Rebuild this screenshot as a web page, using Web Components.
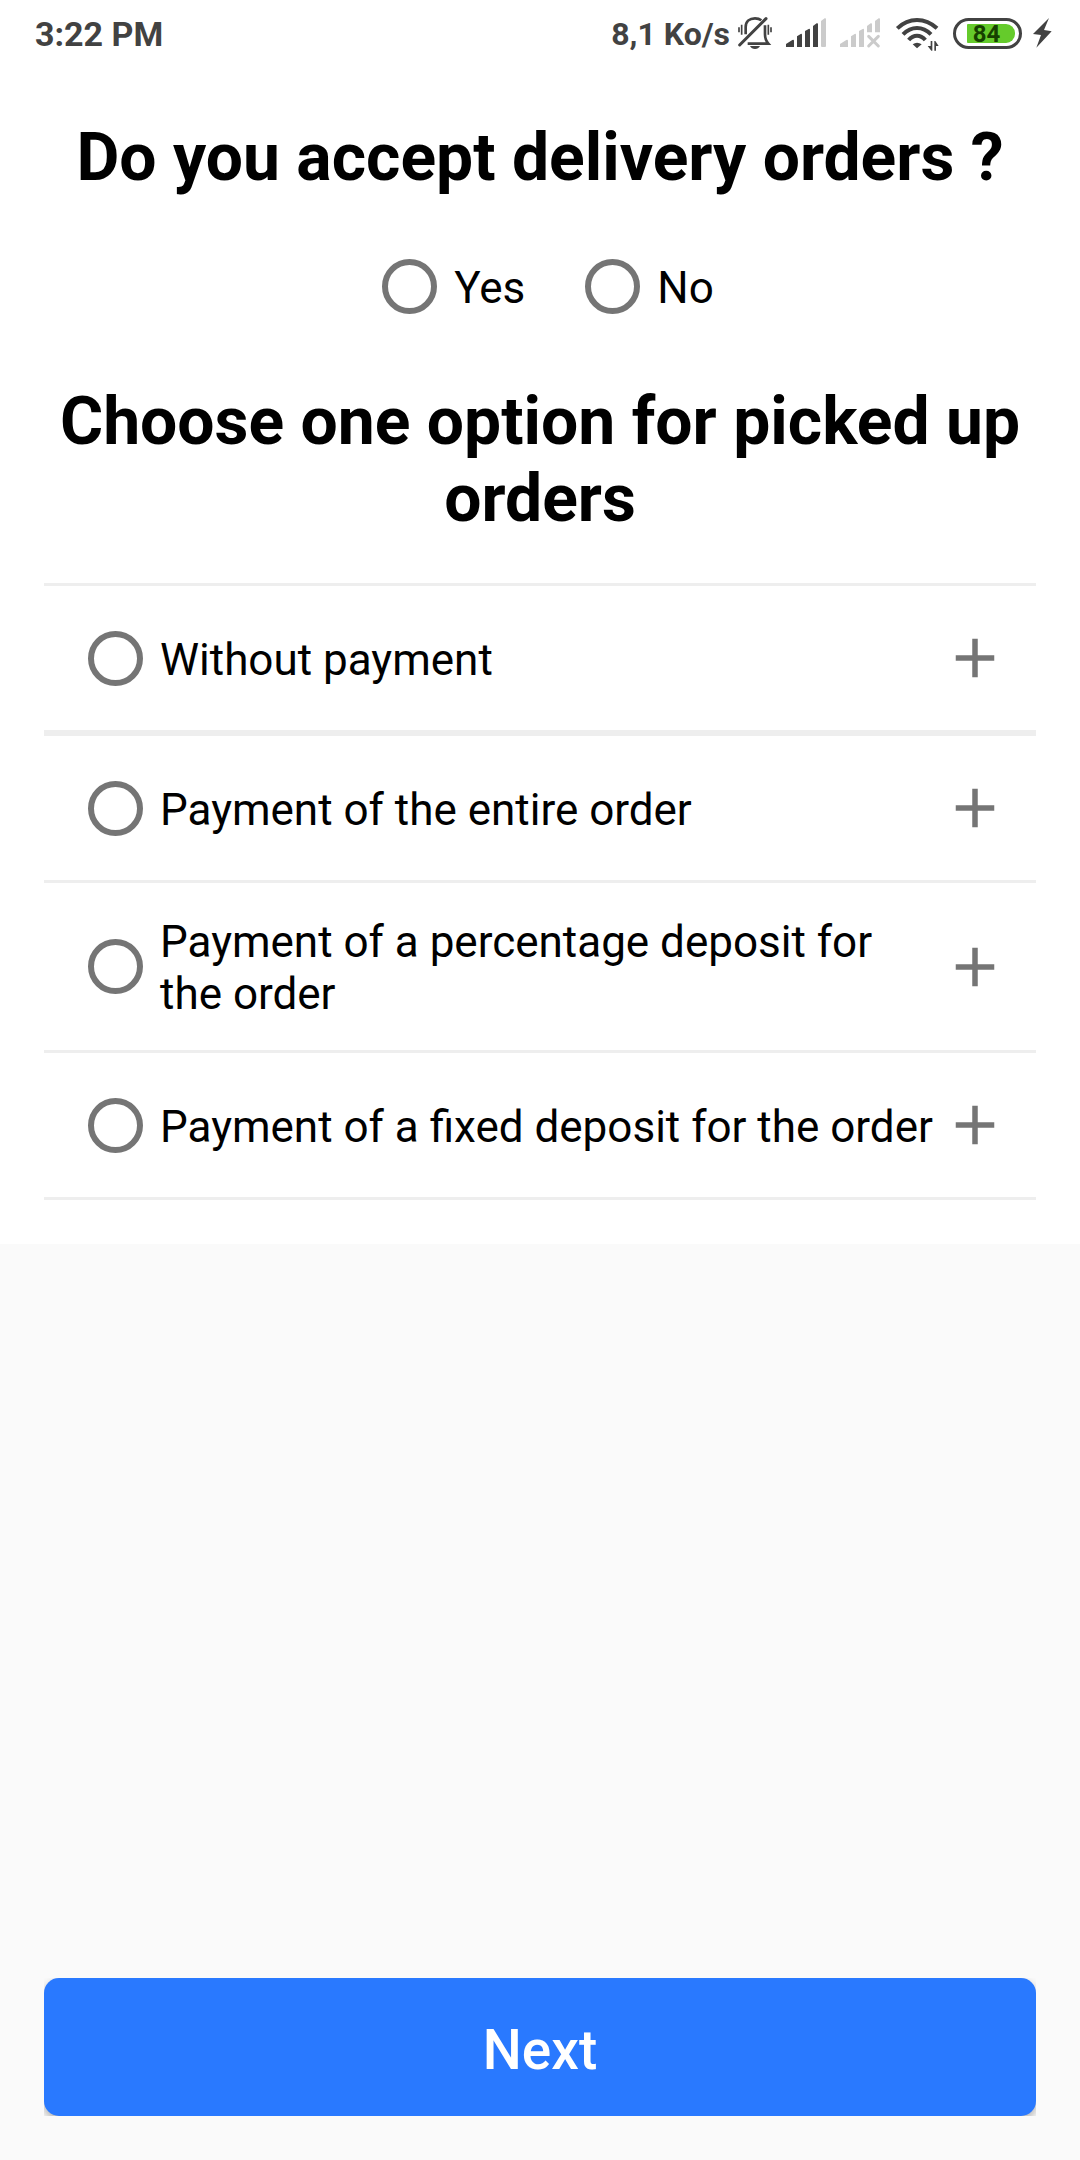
<!DOCTYPE html>
<html lang="en">
<head>
<meta charset="utf-8">
<meta name="viewport" content="width=device-width, initial-scale=1">
<title>Order options</title>
<style>
  body { margin: 0; background: #fafafa; color: #000; font-family: Roboto, "Liberation Sans", sans-serif; }
</style>
</head>
<body>
<order-page>
  <status-bar slot="status" time="3:22 PM" speed="8,1 Ko/s" charge="84"></status-bar>
  <page-title>Do you accept delivery orders ?</page-title>
  <choice-group inline label="Do you accept delivery orders ?">
    <choice-radio value="yes">Yes</choice-radio>
    <choice-radio value="no">No</choice-radio>
  </choice-group>
  <page-title>Choose one option for picked up orders</page-title>
  <choice-group label="Choose one option for picked up orders">
    <option-row heavy value="none">Without payment</option-row>
    <option-row value="full">Payment of the entire order</option-row>
    <option-row value="percentage">Payment of a percentage deposit for the order</option-row>
    <option-row value="fixed">Payment of a fixed deposit for the order</option-row>
  </choice-group>
  <next-button slot="action">Next</next-button>
</order-page>

<template id="order-page">
  <style>
    :host { display: flex; flex-direction: column; min-height: 100vh; }
    .sheet { background: #fff; padding-bottom: 44px; }
    main { padding: 53px 44px 0; }
    footer { margin-top: auto; padding: 44px; }
  </style>
  <div class="sheet">
    <slot name="status"></slot>
    <main><slot></slot></main>
  </div>
  <footer><slot name="action"></slot></footer>
</template>

<template id="status-bar">
  <style>
    :host { display: flex; justify-content: space-between; align-items: center; height: 66px; padding: 0 29px 0 35px; color: #424242; font-size: 34px; line-height: 38px; font-weight: 700; }
    .tray { display: flex; align-items: center; gap: 12px; }
    .time, .speed { padding-top: 2px; }
    .speed { font-size: 32px; margin-right: -5px; }
    svg { display: block; height: 36px; overflow: visible; fill: currentColor; }
    .pale { color: #cbcbcb; }
    .battery { box-sizing: border-box; width: 69px; height: 31px; border: 3px solid currentColor; border-radius: 16px; padding: 0 4px 0 11px; display: flex; align-items: center; }
    .level { flex: 1; height: 19px; border-radius: 1px 9px 9px 1px; background: #65cb2b; color: #164100; font-size: 24px; line-height: 20px; font-weight: 700; text-align: center; padding-right: 9px; }
  </style>
  <span class="time"></span>
  <div class="tray">
    <span class="speed"></span>
    <svg width="36" viewBox="411 45 108 108" aria-hidden="true">
      <g fill="none" stroke="currentColor" stroke-width="8">
        <path d="M437 103V81c0-17 12-26 28-26 8 0 14 2 19 6"/>
        <path d="M443 131h62c-8-9-10-16-10-28V76"/>
        <path d="M419 135 498 56" stroke-width="9" stroke-linecap="round"/>
        <path d="M417 82v15M425 74v30M505 74v30M513 82v15" stroke-width="5"/>
      </g>
      <path d="M450 138h30c-3 6-8 9-15 9s-12-3-15-9z"/>
    </svg>
    <svg width="42" viewBox="555 45 126 108" aria-hidden="true">
      <path d="M558 141v-9l19-12q5-2 5 3v18zM591 141v-32l11-7q4-2 4 3v36zM615 141V93l11-6q4-2 4 3v51zM639 141V78l11-8q4-2 4 3v68z"/>
      <path fill="#cbcbcb" d="M663 138V63l11-8q4-2 4 3v80q0 3-3 3h-9q-3 0-3-3z"/>
    </svg>
    <svg class="pale" width="42" viewBox="57 45 126 108" aria-hidden="true">
      <path d="M60 141v-9l19-12q5-2 5 3v18zM93 141v-32l11-7q4-2 4 3v36zM117 141V93l11-6q4-2 4 3v51zM141 97V78l11-8q4-2 4 3v24zM165 97V63l11-8q4-2 4 3v39z"/>
      <path d="m146 109 29 29m0-29-29 29" stroke="currentColor" stroke-width="9" stroke-linecap="round"/>
    </svg>
    <svg width="48" viewBox="219 45 144 108" aria-hidden="true">
      <g fill="none" stroke="currentColor" stroke-width="12">
        <path d="M232 85q26-25 59-25t60 25"/>
        <path d="M249 103q19-19 42-19t42 19"/>
        <path d="M266 120q11-13 25-13t25 13"/>
      </g>
      <path d="M278 133q13-10 27 0l-14 12z"/>
      <path d="M332 123h5v29h-3l-11-14h9zM343 152v-29h3l10 15h-8v14z"/>
    </svg>
    <div class="battery"><div class="level"></div></div>
    <svg width="17" viewBox="639 45 51 108" aria-hidden="true">
      <path d="m684 54-48 48 24 3-14 38 46-49-23-4z"/>
    </svg>
  </div>
</template>

<template id="page-title">
  <style>
    :host { display: block; }
    h1 { margin: 0; font-size: 66px; line-height: 77px; font-weight: 700; text-align: center; }
  </style>
  <h1><slot></slot></h1>
</template>

<template id="choice-group">
  <style>
    :host { display: block; margin-top: 46px; border-top: 3px solid #eee; }
    :host([inline]) { display: flex; justify-content: center; gap: 60px; margin: 48px 0 55px; padding-left: 16px; border: 0; }
  </style>
  <slot></slot>
</template>

<template id="choice-radio">
  <style>
    :host { display: block; }
    label { display: flex; align-items: center; gap: 17px; min-height: 84px; font-size: 44px; line-height: 52px; cursor: pointer; }
    input { appearance: none; box-sizing: border-box; flex: none; width: 55px; height: 55px; margin: 0; border: 6px solid #757575; border-radius: 50%; }
    input:checked { border-color: #2979ff; background: radial-gradient(circle, #2979ff 13px, transparent 14px); }
    span { padding-top: 3px; }
  </style>
  <label><input type="radio"><span><slot></slot></span></label>
</template>

<template id="option-row">
  <style>
    :host { display: flex; align-items: center; padding: 30px 28px 30px 44px; border-bottom: 3px solid #eee; }
    :host([heavy]) { border-bottom-width: 6px; }
    choice-radio { flex: 1; }
    button { flex: none; width: 66px; height: 66px; padding: 0; border: 0; background: none; color: #757575; }
    svg { display: block; width: 66px; height: 66px; fill: currentColor; }
  </style>
  <choice-radio><slot></slot></choice-radio>
  <button type="button" aria-label="Show details"><svg viewBox="0 0 24 24" aria-hidden="true"><path d="M19 13h-6v6h-2v-6H5v-2h6V5h2v6h6v2z"/></svg></button>
</template>

<template id="next-button">
  <style>
    :host { display: block; overflow: hidden; }
    button { display: block; width: 100%; height: 138px; padding: 6px 0 0; border: 0; border-radius: 15px; background: #2979ff; color: #fff; font: 500 55px/66px Roboto, "Liberation Sans", sans-serif; box-shadow: 0 4px 8px rgba(0, 0, 0, .3); }
  </style>
  <button type="button"><slot></slot></button>
</template>

<script>
  class BaseElement extends HTMLElement {
    constructor() {
      super();
      const template = document.getElementById(this.localName);
      this.attachShadow({ mode: "open" }).append(template.content.cloneNode(true));
    }
  }

  class StatusBar extends BaseElement {
    connectedCallback() {
      this.shadowRoot.querySelector(".time").textContent = this.getAttribute("time");
      this.shadowRoot.querySelector(".speed").textContent = this.getAttribute("speed");
      this.shadowRoot.querySelector(".level").textContent = this.getAttribute("charge");
    }
  }

  class ChoiceRadio extends BaseElement {
    get input() { return this.shadowRoot.querySelector("input"); }
    connectedCallback() {
      this.input.value = this.getAttribute("value") || "";
      this.input.addEventListener("change", () =>
        this.dispatchEvent(new CustomEvent("choose", { bubbles: true, composed: true })));
    }
    get checked() { return this.input.checked; }
    set checked(on) { this.input.checked = on; }
  }

  class OptionRow extends BaseElement {
    get radio() { return this.shadowRoot.querySelector("choice-radio"); }
    get checked() { return this.radio.checked; }
    set checked(on) { this.radio.checked = on; }
  }

  // Radios live in separate shadow roots, so the group keeps the choice single.
  class ChoiceGroup extends BaseElement {
    connectedCallback() {
      this.setAttribute("role", "radiogroup");
      this.setAttribute("aria-label", this.getAttribute("label"));
      this.addEventListener("choose", (event) => {
        for (const item of this.children) if (item !== event.target) item.checked = false;
      });
    }
  }

  customElements.define("choice-radio", ChoiceRadio);
  customElements.define("option-row", OptionRow);
  customElements.define("choice-group", ChoiceGroup);
  customElements.define("status-bar", StatusBar);
  customElements.define("page-title", class extends BaseElement {});
  customElements.define("next-button", class extends BaseElement {});
  customElements.define("order-page", class extends BaseElement {});
</script>
</body>
</html>
